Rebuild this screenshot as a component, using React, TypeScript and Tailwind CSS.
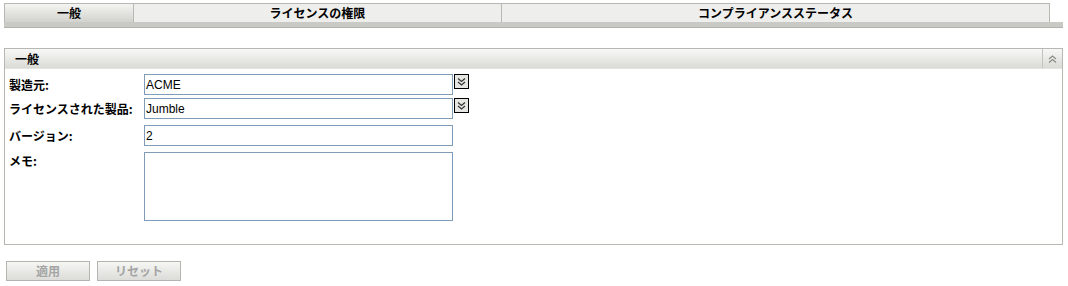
import React from "react";

const LABEL_FONT = { fontFamily: '"Noto Sans CJK JP", "Liberation Sans", sans-serif' };

function DoubleChevron({ up = false, className = "" }: { up?: boolean; className?: string }) {
  return (
    <svg viewBox="0 0 9 8" className={className} fill="none" stroke="currentColor" strokeWidth="1.2">
      {up ? (
        <>
          <path d="M1 4 L4.5 1 L8 4" />
          <path d="M1 7.5 L4.5 4.5 L8 7.5" />
        </>
      ) : (
        <>
          <path d="M1 0.5 L4.5 3.5 L8 0.5" />
          <path d="M1 4 L4.5 7 L8 4" />
        </>
      )}
    </svg>
  );
}

function DropButton() {
  return (
    <div className="w-[15px] h-[15px] border border-black bg-[#e6e6e2] flex items-center justify-center text-[#333]">
      <DoubleChevron className="w-[9px] h-[8px]" />
    </div>
  );
}

const FIELDS = [
  { label: "製造元:", value: "ACME", drop: true },
  { label: "ライセンスされた製品:", value: "Jumble", drop: true },
  { label: "バージョン:", value: "2", drop: false },
];

export default function App() {
  return (
    <div className="w-[1068px] h-[286px] bg-white pt-[3px] pl-[4px] text-[12px]" style={LABEL_FONT}>
      {/* Tabs */}
      <div className="flex h-[19px] w-[1046px] font-bold text-black">
        <div className="w-[129px] border-t border-l border-[#b8b8b2] bg-gradient-to-b from-[#f4f4f2] to-[#d2d2ce] flex items-center justify-center">
          一般
        </div>
        <div className="w-[368px] border-t border-l border-[#b8b8b2] bg-[#eeeeec] flex items-center justify-center">
          ライセンスの権限
        </div>
        <div className="w-[549px] border-t border-l border-r border-[#b8b8b2] bg-[#eeeeec] flex items-center justify-center">
          コンプライアンスステータス
        </div>
      </div>
      <div className="w-[1059px] h-[6px] bg-[#c9cac5] border-b border-[#b2b2ac]" />

      {/* Panel */}
      <div className="mt-[20px] w-[1059px] h-[197px] border border-[#b8b8b2]">
        <div className="flex h-[20px] bg-gradient-to-b from-[#f8f8f6] to-[#dadad6] border-b border-[#e4e4e0]">
          <div className="flex-1 pl-[10px] font-bold flex items-center">一般</div>
          <div className="w-[20px] border-l border-[#c4c4be] flex items-center justify-center text-[#8a8a86]">
            <DoubleChevron up className="w-[9px] h-[8px]" />
          </div>
        </div>

        <div className="pl-[4px] pt-[5px] flex flex-col">
          {FIELDS.map((f, i) => (
            <div key={f.label} className={`flex items-start ${i === 0 ? "" : i === 1 ? "mt-[3px]" : "mt-[6px]"}`}>
              <div className="w-[135px] h-[21px] flex items-center font-bold whitespace-nowrap">{f.label}</div>
              <div
                className="w-[309px] h-[21px] border border-[#7f9db9] flex items-center px-[1px] text-[12px] text-black"
                style={{ fontFamily: '"Liberation Sans", Arial, sans-serif' }}
              >
                {f.value}
              </div>
              {f.drop && (
                <div className="ml-[1px]">
                  <DropButton />
                </div>
              )}
            </div>
          ))}
          <div className="flex items-start mt-[6px]">
            <div className="w-[135px] h-[18px] flex items-center font-bold">メモ:</div>
            <div className="w-[309px] h-[69px] border border-[#7f9db9]" />
          </div>
        </div>
      </div>

      {/* Buttons */}
      <div className="flex gap-[7px] mt-[16px] ml-[2px]">
        <div className="w-[84px] h-[20px] border border-[#b4b4b0] bg-gradient-to-b from-[#f6f6f4] to-[#dcdcd8] flex items-center justify-center font-bold text-[#a4a4a4]">
          適用
        </div>
        <div className="w-[84px] h-[20px] border border-[#b4b4b0] bg-gradient-to-b from-[#f6f6f4] to-[#dcdcd8] flex items-center justify-center font-bold text-[#a4a4a4]">
          リセット
        </div>
      </div>
    </div>
  );
}
